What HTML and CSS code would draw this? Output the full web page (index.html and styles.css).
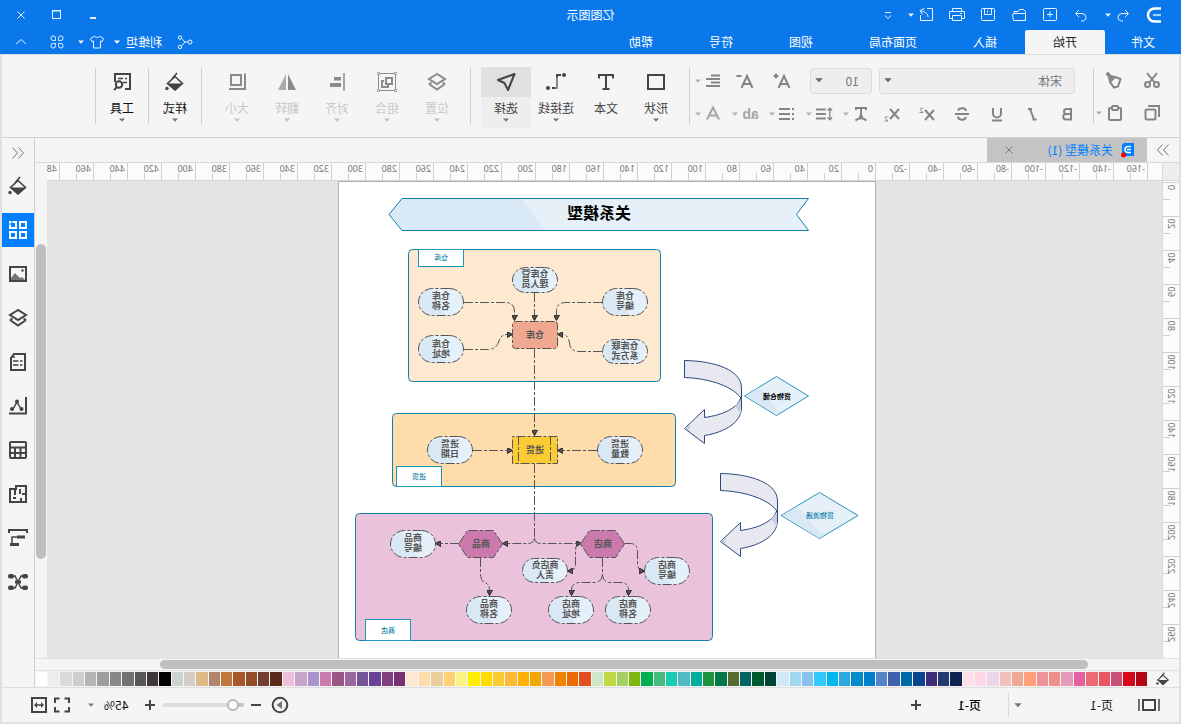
FILE: index.html
```html
<!DOCTYPE html>
<html lang="zh-CN">
<head>
<meta charset="utf-8">
<title>亿图图示</title>
<link rel="stylesheet" href="styles.css">
</head>
<body>
<svg class="sprite" aria-hidden="true">
  <symbol id="caret" viewBox="0 0 8 8"><path d="M1 2.500h6L4 5.800z" fill="currentColor"/></symbol>
  <symbol id="undo" viewBox="0 0 16 16"><path d="M6 3 2.500 6.500 6 10M3 6.500h6a4 4 0 0 1 4 4c0 2-1.500 3.500-4 3.500H8"/></symbol>
  <symbol id="redo" viewBox="0 0 16 16"><path d="M10 3l3.500 3.500L10 10M13 6.500H7a4 4 0 0 0-4 4c0 2 1.500 3.500 4 3.500h1"/></symbol>
  <symbol id="new" viewBox="0 0 16 16"><rect x="1.500" y="1.500" width="13" height="12" rx="1"/><path d="M8 4.500v6M5 7.500h6"/></symbol>
  <symbol id="open" viewBox="0 0 16 16"><path d="M1.500 13.500v-9l2-2h4l1.500 2h4v2M1.500 13.500v-6l1-1h10l2 1-1 6z"/></symbol>
  <symbol id="save" viewBox="0 0 16 16"><rect x="1.500" y="1.500" width="13" height="12" rx="1"/><path d="M4.500 1.500v6h7v-6M8.500 3.500v2"/></symbol>
  <symbol id="print" viewBox="0 0 16 16"><path d="M3.500 4.500v-3h9v3M3.500 11.500h-3v-7h15v7h-3M3.500 8.500h9v5h-9zM3 6.500h2"/></symbol>
  <symbol id="export" viewBox="0 0 16 16"><path d="M7 1.500H1.500v12h12V8M6 10c0-3 2-5 7-6M9.500 1.500 14 3.500 11.500 7.500"/></symbol>
  <symbol id="more" viewBox="0 0 8 12"><path d="M1 3.500h6M1 6.500l3 3 3-3"/></symbol>
  <symbol id="share" viewBox="0 0 16 16"><circle cx="3" cy="8" r="2"/><circle cx="13" cy="3.500" r="1.700"/><circle cx="13" cy="13" r="1.700"/><path d="M5 8h3l3.500-3.500M8 8l3.500 4"/></symbol>
  <symbol id="shirt" viewBox="0 0 16 16"><path d="M5.500 2 1.500 4.500l1.300 3L4.500 7v7h7V7l1.700.5 1.300-3-4-2.500c-1 2-4 2-5 0z"/></symbol>
  <symbol id="clover" viewBox="0 0 16 16"><path d="M6.500 6.500H4.500a2.300 2.300 0 1 1 2-2zM9.500 6.500v-2a2.300 2.300 0 1 1 2 2zM6.500 9.500v2a2.300 2.300 0 1 1-2-2zM9.500 9.500h2a2.300 2.300 0 1 1-2 2z"/></symbol>
  <symbol id="up" viewBox="0 0 16 16"><path d="M3 10l5-4.500L13 10"/></symbol>
  <symbol id="min" viewBox="0 0 12 12"><path d="M3 9h6" stroke-width="2"/></symbol>
  <symbol id="max" viewBox="0 0 12 12"><rect x="2.500" y="1.500" width="8" height="8"/><path d="M2 2h9"/></symbol>
  <symbol id="close" viewBox="0 0 12 12"><path d="M2.500 2.500l7 7M9.500 2.500l-7 7"/></symbol>

  <symbol id="cut" viewBox="0 0 18 18"><path d="M4 2l8 10M14 2 6 12"/><circle cx="4.500" cy="13.500" r="2.500"/><circle cx="13.500" cy="13.500" r="2.500"/></symbol>
  <symbol id="painter" viewBox="0 0 18 18"><path d="M2.500 8 8 6l5 5-4 5.500-4-1z"/><path d="M8 5l4-1 3-3.500L17.500 3 15 6l-1 5z" fill="currentColor" stroke="none"/></symbol>
  <symbol id="copy" viewBox="0 0 18 18"><rect x="5.500" y="5.500" width="10" height="10" rx="1"/><path d="M2 13V2h11"/></symbol>
  <symbol id="paste" viewBox="0 0 18 18"><rect x="3" y="4" width="12" height="12" rx="1"/><rect x="6" y="2" width="6" height="4" rx="1" fill="#f5f5f5"/></symbol>
  <symbol id="fontup" viewBox="0 0 18 18"><path d="M1.500 16 7 4l5.500 12M3.500 12h7M12.500 4h5M15 1.500v5"/></symbol>
  <symbol id="fontdown" viewBox="0 0 18 18"><path d="M1.500 16 7 4l5.500 12M3.500 12h7M12.500 4h5"/></symbol>
  <symbol id="align" viewBox="0 0 18 18"><path d="M2 3.500h9M2 7h14M2 10.500h9M2 14h14"/></symbol>
  <symbol id="bold" viewBox="0 0 18 18"><path d="M5 4h4.500a2.500 2.500 0 0 1 0 5H5zM5 9h5.500a2.800 2.800 0 0 1 0 5.500H5z"/></symbol>
  <symbol id="italic" viewBox="0 0 18 18"><path d="M9 4h4M4.500 14.500h4M11 4 7 14.500"/></symbol>
  <symbol id="under" viewBox="0 0 18 18"><path d="M5 3v5.500a4 4 0 0 0 8 0V3M4 15.500h10"/></symbol>
  <symbol id="strike" viewBox="0 0 18 18"><path d="M13 5.500c-1-3-8-3-8 .5M5 12c1 4 8 3.500 8-.5M2 9h14"/></symbol>
  <symbol id="sup" viewBox="0 0 18 18"><path d="M2 5l9 10M11 5 2 15"/><path d="M13 4c.5-1.500 3-1 2.800.5L13 7.500h3.500" stroke-width="1"/></symbol>
  <symbol id="sub" viewBox="0 0 18 18"><path d="M2 4l9 10M11 4 2 14"/><path d="M13 12.500c.5-1.500 3-1 2.800.5L13 16h3.500" stroke-width="1"/></symbol>
  <symbol id="textfx" viewBox="0 0 18 18"><path d="M4 5V3h10v2M9 3v8M7 11.500h4M3.500 15.500c3-3 8-3 11 0"/></symbol>
  <symbol id="spacing" viewBox="0 0 20 18"><path d="M8 4h11M8 9h11M8 14h11"/><path d="M3.500 3v12M1 5l2.500-2.500L6 5M1 13l2.500 2.500L6 13" stroke-width="1.500"/></symbol>
  <symbol id="list" viewBox="0 0 18 18"><path d="M6 4h11M6 9h11M6 14h11M2 4h2M2 9h2M2 14h2"/></symbol>
  <symbol id="colorA" viewBox="0 0 18 18"><path d="M3 14.500 9 2.500l6 12M5.500 10.500h7"/></symbol>

  <symbol id="shape" viewBox="0 0 20 20"><rect x="2" y="3" width="16" height="14"/></symbol>
  <symbol id="text" viewBox="0 0 20 20"><path d="M3 6.500V3h14v3.500M10 3v14M6.500 17h7"/></symbol>
  <symbol id="connector" viewBox="0 0 20 20"><path d="M5 3h4v13h5" stroke="#888"/><path d="M5 3h4v2M11 16h3"/><circle cx="2" cy="3" r="2" fill="currentColor" stroke="none"/><circle cx="18" cy="16" r="2" fill="currentColor" stroke="none"/></symbol>
  <symbol id="pointer" viewBox="0 0 20 20"><path d="M1.500 2 18 8l-6.500 3L8 18z" stroke-linejoin="round"/></symbol>
  <symbol id="layers" viewBox="0 0 20 20"><path d="M10 2l8 5-8 5-8-5zM2 12l8 5.500 8-5.500M2 12l2.500-1.500M18 12l-2.500-1.500"/></symbol>
  <symbol id="group" viewBox="0 0 20 20"><g stroke-width="1"><path d="M1.500 1.500h17v17h-17z"/><g fill="#f5f5f5"><circle cx="1.500" cy="1.500" r="1.300"/><circle cx="18.500" cy="1.500" r="1.300"/><circle cx="1.500" cy="18.500" r="1.300"/><circle cx="18.500" cy="18.500" r="1.300"/></g></g><rect x="5" y="6" width="6" height="6"/><path d="M13 9h2v6H9v-2"/></symbol>
  <symbol id="aligns" viewBox="0 0 20 20"><path d="M3 1v18" stroke-width="1.500"/><rect x="6" y="5" width="7" height="3.500" fill="currentColor" stroke="none"/><rect x="6" y="11" width="11" height="4" fill="currentColor" stroke="none"/></symbol>
  <symbol id="flip" viewBox="0 0 20 20"><path d="M9 2v16H1z" fill="currentColor" stroke="none"/><path d="M11 2v16h8z" fill="currentColor" stroke="none" opacity=".7"/></symbol>
  <symbol id="size" viewBox="0 0 20 20"><rect x="6" y="3" width="10" height="10"/><path d="M2 1.500V17h16"/></symbol>
  <symbol id="bucket" viewBox="0 0 20 20"><path d="M10 4.500 2.500 11.500 10 18l7.500-6.500z" stroke-width="1.600"/><path d="M2.500 11.500h15L10 18.500z" fill="currentColor" stroke="none"/><path d="M8 1l5 6" stroke-width="1.600"/><circle cx="18" cy="16.500" r="1.700" fill="currentColor" stroke="none"/></symbol>
  <symbol id="tools" viewBox="0 0 20 20"><path d="M7 17H2V2h15v8"/><path d="M5 6.500h2M9 6.500h5M5 10.500h4" stroke-width="1.500"/><circle cx="13" cy="12.500" r="3.200"/><path d="M15 15l3 3"/></symbol>

  <symbol id="gridicon" viewBox="0 0 20 20"><rect x="2" y="2" width="6" height="6"/><rect x="12" y="2" width="6" height="6"/><rect x="2" y="12" width="6" height="6"/><rect x="12" y="12" width="6" height="6"/><path d="M16 1v3h3" stroke="#007fff" stroke-width="1"/></symbol>
  <symbol id="image" viewBox="0 0 20 20"><rect x="2" y="3" width="16" height="14"/><path d="M3 16l3-3 2 1 5-5 4 5v2z" fill="#777" stroke="none"/><circle cx="5.500" cy="6.500" r="1.200" fill="currentColor" stroke="none"/></symbol>
  <symbol id="doc" viewBox="0 0 20 20"><path d="M3 2h11l3 4v12H3z"/><path d="M5.500 9H8M9.500 9H15M5.500 13H8M9.500 13H15M13 5h4" stroke-width="1.500"/></symbol>
  <symbol id="chart" viewBox="0 0 20 20"><path d="M2 1v16.500h17"/><path d="M7 13l4-7 4 7" stroke-width="1.500"/><g fill="currentColor" stroke="none"><circle cx="6.500" cy="13" r="2"/><circle cx="11" cy="5.500" r="2"/><circle cx="16" cy="13" r="2"/></g></symbol>
  <symbol id="table" viewBox="0 0 20 20"><rect x="2" y="2" width="16" height="16" rx="1"/><path d="M2 7.500h16M2 13h16M7.500 8v10M13 8v10"/></symbol>
  <symbol id="plan" viewBox="0 0 20 20"><path d="M2 2h10v3h6v13H2zM2 10h4M8 5v5M12 14h3M7 18v-4M13 6v5"/></symbol>
  <symbol id="gantt" viewBox="0 0 20 20"><path d="M1 5V2h18v3" stroke-width="2"/><path d="M3 9h8" stroke-width="3"/><path d="M11 9h5v7" stroke-width="1.500"/><path d="M9 16.500h9" stroke-width="3"/></symbol>
  <symbol id="mind" viewBox="0 0 20 20"><path d="M4 4h3l3 6 3-6h3M4 16h3l3-6 3 6h3M7 10h6" stroke-width="1.500"/><g fill="currentColor" stroke="none"><rect x="0" y="2" width="6" height="4.500" rx="2"/><rect x="14" y="2" width="6" height="4.500" rx="2"/><rect x="0" y="13.500" width="6" height="4.500" rx="2"/><rect x="14" y="13.500" width="6" height="4.500" rx="2"/><rect x="7" y="8.500" width="6" height="3"/></g></symbol>
  <symbol id="dbl-right" viewBox="0 0 14 14"><path d="M1.500 1.500 6.500 7l-5 5.500M7.500 1.500l5 5.500-5 5.500"/></symbol>
  <symbol id="dbl-left" viewBox="0 0 14 14"><path d="M12.500 1.500 7.500 7l5 5.500M6.500 1.500 1.500 7l5 5.500"/></symbol>
  <symbol id="pageview" viewBox="0 0 22 16"><rect x="5" y="3" width="12" height="10" stroke-width="2"/><path d="M1 2v12M21 2v12" stroke-width="1.500"/></symbol>
  <symbol id="plus" viewBox="0 0 12 12"><path d="M6 1v10M1 6h10" stroke-width="2"/></symbol>
  <symbol id="minus" viewBox="0 0 12 12"><path d="M1 6h10" stroke-width="2"/></symbol>
  <symbol id="play" viewBox="0 0 18 18"><circle cx="9" cy="9" r="7.300"/><path d="M7 5l5.500 4L7 13z" fill="#777" stroke="none"/></symbol>
  <symbol id="full" viewBox="0 0 18 18"><path d="M2 7V2.500h4.500M11.500 2.500H16V7M16 11v4.500h-4.500M6.500 15.500H2V11"/></symbol>
  <symbol id="fit" viewBox="0 0 18 18"><rect x="2" y="2" width="14" height="14"/><path d="M6 9h6" stroke-width="1.500"/><path d="M7 6 4 9l3 3zM11 6l3 3-3 3z" fill="currentColor" stroke="none"/></symbol>
  <marker id="arrow" markerUnits="userSpaceOnUse" markerWidth="6" markerHeight="6" refX="5" refY="3" orient="auto"><path d="M0 0l5.500 3L0 6z" fill="#555"/></marker>
  <linearGradient id="pill" x1="0" y1="0" x2="1" y2=".35"><stop offset=".68" stop-color="#e5f0f9"/><stop offset=".68" stop-color="#d9e8f5"/></linearGradient>
</svg>

<div class="app">
  <header class="chrome">
    <div class="titlebar">
      <div class="quick">
        <svg class="logo" viewBox="0 0 16 16"><path d="M1 1.500h6.500a6.500 6.500 0 0 1 0 13H1" fill="none" stroke="#fff" stroke-width="2.600"/><path d="M1 8h8" stroke="#9cd0ff" stroke-width="2.200"/></svg>
        <div class="pair"><button aria-label="撤销"><svg class="i16"><use href="#undo"/></svg></button><svg class="i8"><use href="#caret"/></svg></div>
        <button aria-label="恢复"><svg class="i16"><use href="#redo"/></svg></button>
        <button aria-label="新建"><svg class="i16"><use href="#new"/></svg></button>
        <button aria-label="打开"><svg class="i16"><use href="#open"/></svg></button>
        <button aria-label="保存"><svg class="i16"><use href="#save"/></svg></button>
        <button aria-label="打印"><svg class="i16"><use href="#print"/></svg></button>
        <div class="pair"><button aria-label="导出"><svg class="i16"><use href="#export"/></svg></button><svg class="i8"><use href="#caret"/></svg></div>
        <button aria-label="更多"><svg class="i8 tall"><use href="#more"/></svg></button>
      </div>
      <div class="title">亿图图示</div>
      <div class="wincontrols">
        <button aria-label="最小化"><svg class="i12"><use href="#min"/></svg></button>
        <button aria-label="最大化"><svg class="i12"><use href="#max"/></svg></button>
        <button aria-label="关闭"><svg class="i12"><use href="#close"/></svg></button>
      </div>
    </div>
    <nav class="menubar">
      <button class="menu file">文件</button>
      <button class="menu active">开始</button>
      <button class="menu">插入</button>
      <button class="menu">页面布局</button>
      <button class="menu">视图</button>
      <button class="menu">符号</button>
      <button class="menu">帮助</button>
      <div class="account">
        <button class="share" aria-label="分享"><svg class="i16"><use href="#share"/></svg></button>
        <button class="user">利维坦<svg class="i8"><use href="#caret"/></svg></button>
        <button class="skin" aria-label="皮肤"><svg class="i16"><use href="#shirt"/></svg><svg class="i8"><use href="#caret"/></svg></button>
        <button class="apps" aria-label="应用"><svg class="i16"><use href="#clover"/></svg></button>
        <button aria-label="收起"><svg class="i16"><use href="#up"/></svg></button>
      </div>
    </nav>
  </header>

  <div class="work">
    <div class="ribbon">
      <div class="clip">
        <button aria-label="剪切"><svg class="i18"><use href="#cut"/></svg></button>
        <button aria-label="格式刷"><svg class="i18"><use href="#painter"/></svg></button>
        <button aria-label="复制"><svg class="i18"><use href="#copy"/></svg></button>
        <button class="paste" aria-label="粘贴"><svg class="i18"><use href="#paste"/></svg><svg class="i8"><use href="#caret"/></svg></button>
      </div>
      <span class="sep tight"></span>
      <div class="fonts">
        <div class="row first">
          <label class="combo family"><select aria-label="字体"><option>宋体</option></select><svg class="i10 drop"><use href="#caret"/></svg></label>
          <label class="combo points"><select aria-label="字号"><option>10</option></select><svg class="i10 drop"><use href="#caret"/></svg></label>
          <button class="wide" aria-label="增大字号"><svg class="i18"><use href="#fontup"/></svg></button>
          <button class="wide" aria-label="减小字号"><svg class="i18"><use href="#fontdown"/></svg></button>
          <button class="split" aria-label="对齐"><svg class="i18"><use href="#align"/></svg><svg class="i8"><use href="#caret"/></svg></button>
        </div>
        <div class="row">
          <button class="fmt" aria-label="加粗"><svg class="i18"><use href="#bold"/></svg></button>
          <button class="fmt" aria-label="斜体"><svg class="i18"><use href="#italic"/></svg></button>
          <button class="fmt" aria-label="下划线"><svg class="i18"><use href="#under"/></svg></button>
          <button class="fmt" aria-label="删除线"><svg class="i18"><use href="#strike"/></svg></button>
          <button class="fmt" aria-label="上标"><svg class="i18"><use href="#sup"/></svg></button>
          <button class="fmt" aria-label="下标"><svg class="i18"><use href="#sub"/></svg></button>
          <button class="split" aria-label="文字效果"><svg class="i18"><use href="#textfx"/></svg><svg class="i8"><use href="#caret"/></svg></button>
          <button class="split" aria-label="行距"><svg class="i18"><use href="#spacing"/></svg><svg class="i8"><use href="#caret"/></svg></button>
          <button class="split" aria-label="项目符号"><svg class="i18"><use href="#list"/></svg><svg class="i8"><use href="#caret"/></svg></button>
          <button class="split light"><span class="ab">ab</span><svg class="i8"><use href="#caret"/></svg></button>
          <button class="split light" aria-label="字体颜色"><svg class="i18"><use href="#colorA"/></svg><svg class="i8"><use href="#caret"/></svg></button>
        </div>
      </div>
      <span class="sep flush"></span>
      <button class="big"><span class="pic"><svg class="i20"><use href="#shape"/></svg></span><span>形状</span><svg class="i8"><use href="#caret"/></svg></button>
      <button class="big"><span class="pic"><svg class="i20"><use href="#text"/></svg></span><span>文本</span></button>
      <button class="big"><span class="pic"><svg class="i20"><use href="#connector"/></svg></span><span>连接线</span><svg class="i8"><use href="#caret"/></svg></button>
      <button class="big on"><span class="pic"><svg class="i20"><use href="#pointer"/></svg></span><span>选择</span><svg class="i8"><use href="#caret"/></svg></button>
      <span class="sep"></span>
      <button class="big off"><span class="pic"><svg class="i20"><use href="#layers"/></svg></span><span>位置</span><svg class="i8"><use href="#caret"/></svg></button>
      <button class="big off"><span class="pic"><svg class="i20"><use href="#group"/></svg></span><span>组合</span><svg class="i8"><use href="#caret"/></svg></button>
      <button class="big off"><span class="pic"><svg class="i20"><use href="#aligns"/></svg></span><span>对齐</span><svg class="i8"><use href="#caret"/></svg></button>
      <button class="big off"><span class="pic"><svg class="i20"><use href="#flip"/></svg></span><span>翻转</span><svg class="i8"><use href="#caret"/></svg></button>
      <button class="big off"><span class="pic"><svg class="i20"><use href="#size"/></svg></span><span>大小</span><svg class="i8"><use href="#caret"/></svg></button>
      <span class="sep last"></span>
      <button class="big dark"><span class="pic"><svg class="i20"><use href="#bucket"/></svg></span><span>样式</span><svg class="i8"><use href="#caret"/></svg></button>
      <span class="sep tight"></span>
      <button class="big dark"><span class="pic"><svg class="i20"><use href="#tools"/></svg></span><span>工具</span><svg class="i8"><use href="#caret"/></svg></button>
      <span class="sep tight"></span>
    </div>

    <div class="middle">
      <main class="main">
        <div class="doctabs">
          <button class="expand" aria-label="展开"><svg class="i14"><use href="#dbl-right"/></svg></button>
          <div class="doctab">
            <svg class="docicon" viewBox="0 0 14 16"><path d="M1 1h10l2 2v11H1z" fill="#0080ff"/><path d="M4 4.500h3a3 3 0 0 1 0 6H4M4 7.500h4" fill="none" stroke="#fff" stroke-width="1.500"/><circle cx="11.500" cy="13" r="2.500" fill="#f00"/></svg>
            <span class="docname">关系模型 (1)</span>
            <button aria-label="关闭标签"><svg class="i12"><use href="#close"/></svg></button>
          </div>
        </div>
        <div class="stage">
          <div class="corner"></div>
          <div class="hruler" id="hruler"></div>
          <div class="vscroll"><div class="vthumb"></div></div>
          <div class="vruler" id="vruler"></div>
          <div class="canvas">
            <svg class="page" viewBox="306 182 536 476" width="536" height="476">
              <g class="banner">
                <path class="b1" d="M372.500 198.500H779l13 16-13 16H372.500l12-16z"/>
                <path class="b2" d="M659 199h120l12.500 15.500L779 230H638z"/>
                <path class="line" d="M372.500 198.500H779l13 16-13 16H372.500l12-16z"/>
                <text class="heading" x="582" y="219">关系模型</text>
              </g>
              <g class="zones">
                <rect x="520.500" y="249.500" width="252" height="132" rx="4" fill="#fde8d0"/>
                <rect x="505.500" y="413.500" width="283" height="73" rx="4" fill="#fedcab"/>
                <rect x="468.500" y="513.500" width="357" height="127" rx="4" fill="#ebc2db"/>
              </g>
              <g class="tags">
                <rect x="717.500" y="249.500" width="45" height="17"/><text x="740" y="260">仓库</text>
                <rect x="739.500" y="466.500" width="45" height="20"/><text x="762" y="479">进货</text>
                <rect x="770.500" y="619.500" width="45" height="21"/><text x="793" y="633">商店</text>
              </g>
              <g class="links">
                <path d="M579 302.500H616Q624.500 303 624.500 311V320"/>
                <path d="M579 351.500H603Q611 351 611.500 343Q613 334.500 618 334.500H623"/>
                <path d="M717 302.500H675Q666.500 303 666.500 311V320"/>
                <path d="M717 349.500H693Q684 349 682 341Q680 334.500 674 334.500H669"/>
                <path d="M646.500 293V320"/>
                <path d="M646.500 349V435"/>
                <path d="M584 450.500H623"/>
                <path d="M708 450.500H669"/>
                <path class="plain" d="M646.500 464V538"/>
                <path d="M646.500 538Q646 543.500 640 543.500H600"/>
                <path d="M646.500 538Q647 543.500 653 543.500H678"/>
                <path d="M722 543.500H745"/>
                <path d="M700.500 558V575Q700 582 695 583Q691.500 585 691.500 590V595"/>
                <path d="M556 543.500H550Q543.500 544 543.500 551V564Q543 571 537 571"/>
                <path d="M600 543.500Q605.500 544 605.500 550V565Q606 571 613 571"/>
                <path d="M578.500 558V575Q578 582 571 582.500H560Q552.500 583 552.500 590V595"/>
                <path d="M578.500 575Q579 582 586 582.500H602Q609.500 583 609.500 590V595"/>
              </g>
              <g class="cores">
                <rect x="623.500" y="321.500" width="45" height="27" rx="3" fill="#f0a890"/><text x="646" y="338">仓库</text>
                <rect x="623.500" y="436.500" width="45" height="27" fill="#facb32"/><path d="M630.500 436V464M662.500 436V464"/><text x="646" y="453">进货</text>
                <path d="M556.500 544l9-13.500h26l9 13.500-9 13.500h-26z" fill="#cc7aae"/><text x="578" y="547">商店</text>
                <path d="M678.500 544l9-13.500h26l9 13.500-9 13.500h-26z" fill="#cc7aae"/><text x="700" y="547">商品</text>
              </g>
              <g class="pills">
                <rect x="623.500" y="267.500" width="45" height="25" rx="13"/><text x="646" y="277">仓库管<tspan x="646" dy="10">理人员</tspan></text>
                <rect x="533.500" y="288.500" width="45" height="27" rx="14"/><text x="556" y="299">仓库<tspan x="556" dy="10">编号</tspan></text>
                <rect x="533.500" y="339.500" width="45" height="24" rx="12"/><text x="556" y="349">仓库联<tspan x="556" dy="10">系方式</tspan></text>
                <rect x="717.500" y="288.500" width="45" height="27" rx="14"/><text x="740" y="299">仓库<tspan x="740" dy="10">名称</tspan></text>
                <rect x="717.500" y="335.500" width="45" height="27" rx="14"/><text x="740" y="347">仓库<tspan x="740" dy="10">地址</tspan></text>
                <rect x="538.500" y="436.500" width="45" height="27" rx="14"/><text x="561" y="447">进货<tspan x="561" dy="10">数量</tspan></text>
                <rect x="708.500" y="436.500" width="45" height="27" rx="14"/><text x="731" y="447">进货<tspan x="731" dy="10">日期</tspan></text>
                <rect x="745.500" y="530.500" width="45" height="27" rx="14"/><text x="768" y="541">商品<tspan x="768" dy="10">编号</tspan></text>
                <rect x="613.500" y="558.500" width="45" height="24" rx="12"/><text x="636" y="568">商店负<tspan x="636" dy="10">责人</tspan></text>
                <rect x="491.500" y="557.500" width="45" height="27" rx="14"/><text x="514" y="568">商店<tspan x="514" dy="10">编号</tspan></text>
                <rect x="669.500" y="596.500" width="45" height="27" rx="14"/><text x="692" y="607">商品<tspan x="692" dy="10">名称</tspan></text>
                <rect x="587.500" y="596.500" width="45" height="27" rx="14"/><text x="610" y="607">商店<tspan x="610" dy="10">地址</tspan></text>
                <rect x="530.500" y="596.500" width="45" height="27" rx="14"/><text x="553" y="607">商店<tspan x="553" dy="10">名称</tspan></text>
              </g>
              <g class="diamonds">
                <path d="M404.500 376.500 436.500 396l-32 19.500-32-19.500z"/><path class="shade" d="M422 387.500 435.500 396l-31 19-3-2z"/><text class="ink" x="404" y="399">货物仓储</text>
                <path d="M361.500 492.500 400 515.500l-38.500 23-38.500-23z"/><path class="shade" d="M384 506.500 399 515.500l-37 22.500-4-2z"/><text x="361" y="518">货物流通</text>
              </g>
              <g class="arrows">
                <g id="curve">
                  <path d="M496.500 360.500C466 361 439.500 370 439.500 388V399C447 387 470 378.500 496.500 377.500z" transform="translate(0 0)"/>
                  <path d="M439.500 399V408C440 422 455 432 476.500 435.500V443.500L496.500 428.500 476.500 409.500V417.500C458 415 443 408 440 397z"/>
                  <path class="dim" d="M440 399.500V414l6-8zM496 428l-5-4 1 7z"/>
                </g>
                <use href="#curve" x="-36" y="113"/>
              </g>
            </svg>
          </div>
        </div>
        <div class="hscroll"><div class="hthumb"></div></div>
        <div class="palette"><button class="fill" aria-label="填充"><svg class="i14 paint"><use href="#bucket"/></svg></button><div class="swatches" id="swatches"></div></div>
      </main>
      <aside class="side">
        <button class="collapse" aria-label="收起面板"><svg class="i14"><use href="#dbl-left"/></svg></button>
        <button aria-label="填充"><svg class="i20"><use href="#bucket"/></svg></button>
        <button class="current" aria-label="主题"><svg class="i20"><use href="#gridicon"/></svg></button>
        <button aria-label="图片"><svg class="i20"><use href="#image"/></svg></button>
        <button aria-label="图层"><svg class="i20"><use href="#layers"/></svg></button>
        <button aria-label="页面"><svg class="i20"><use href="#doc"/></svg></button>
        <button aria-label="图表"><svg class="i20"><use href="#chart"/></svg></button>
        <button aria-label="表格"><svg class="i20"><use href="#table"/></svg></button>
        <button aria-label="平面图"><svg class="i20"><use href="#plan"/></svg></button>
        <button aria-label="甘特图"><svg class="i20"><use href="#gantt"/></svg></button>
        <button aria-label="思维导图"><svg class="i20"><use href="#mind"/></svg></button>
      </aside>
    </div>

    <footer class="status">
      <button class="view" aria-label="页面视图"><svg class="pv"><use href="#pageview"/></svg></button>
      <button class="pagepick"><span>页-1</span><svg class="i10"><use href="#caret"/></svg></button>
      <button class="pagetab">页-1</button>
      <button class="add" aria-label="添加页"><svg class="i12"><use href="#plus"/></svg></button>
      <div class="zoom">
        <button aria-label="演示"><svg class="i18"><use href="#play"/></svg></button>
        <button class="zout" aria-label="缩小"><svg class="i12"><use href="#minus"/></svg></button>
        <input class="range" type="range" min="0" max="100" value="8" aria-label="缩放">
        <button class="zin" aria-label="放大"><svg class="i12"><use href="#plus"/></svg></button>
        <button class="percent"><span>45%</span><svg class="i8"><use href="#caret"/></svg></button>
        <button class="fullscreen" aria-label="全屏"><svg class="i18"><use href="#full"/></svg></button>
        <button aria-label="适应宽度"><svg class="i18"><use href="#fit"/></svg></button>
      </div>
    </footer>
  </div>
</div>
<script src="script.js"></script>
</body>
</html>
```
FILE: styles.css
```css
* { box-sizing: border-box; }
body {
  margin: 0;
  font: 12px/16px "Noto Sans CJK SC", sans-serif;
  color: #222;
}
button {
  display: flex;
  align-items: center;
  justify-content: center;
  margin: 0;
  padding: 0;
  border: 0;
  background: none;
  color: inherit;
  font: inherit;
}
svg { display: block; flex: none; fill: none; stroke: currentColor; }
.sprite { position: absolute; width: 0; height: 0; }
.i8 { width: 8px; height: 8px; stroke: none; }
.i8.tall { height: 12px; stroke: currentColor; }
.i10 { width: 10px; height: 10px; stroke: none; }
.i12 { width: 12px; height: 12px; }
.i14 { width: 14px; height: 14px; }
.i16 { width: 16px; height: 16px; }
.i18 { width: 18px; height: 18px; stroke-width: 2; }
.i20 { width: 20px; height: 20px; stroke-width: 2; }

/* The whole window is shown flipped left to right */
.app {
  display: flex;
  flex-direction: column;
  height: 100vh;
  overflow: hidden;
  transform: scaleX(-1);
  background: #f5f5f5;
}

/* Title bar and menus */
.chrome { background: #0a78eb; color: #e8f3ff; }
.titlebar { display: grid; grid-template-columns: 1fr auto 1fr; align-items: center; height: 30px; }
.quick { display: flex; align-items: center; gap: 15px; padding-left: 19px; }
.logo { width: 16px; height: 16px; stroke: none; }
.pair { display: flex; align-items: center; gap: 3px; }
.title { color: #fff; }
.wincontrols { display: flex; justify-content: flex-end; padding-right: 3px; }
.wincontrols button { width: 36px; height: 28px; }
.menubar { display: flex; height: 24px; }
.menu { padding: 0 28px; color: #fff; }
.menu.file { padding: 0 26px; }
.menu.active { background: #f5f5f5; color: #222; border-radius: 2px 2px 0 0; }
.account { display: flex; align-items: center; margin-left: auto; padding-right: 13px; }
.share { margin-right: 15px; }
.user { gap: 5px; margin-right: 8px; color: #fff; }
.skin { gap: 4px; margin-right: 12px; }
.apps { margin-right: 20px; }

.work {
  display: flex;
  flex: 1;
  flex-direction: column;
  min-height: 0;
  border: solid #e0e0e0;
  border-width: 0 2px 2px;
}

/* Ribbon */
.ribbon {
  display: flex;
  align-items: flex-start;
  height: 84px;
  padding: 12px 0 0 8px;
  border-top: 1px solid #dcdcdc;
  border-bottom: 1px solid #d0d0d0;
}
.sep { width: 1px; height: 56px; margin: 1px 8px 0 10px; background: #d0d0d0; }
.sep.tight { margin: 1px 1px 0; }
.sep.flush { margin-left: 0; }
.sep.last { margin-right: 1px; }
.clip {
  display: grid;
  grid-template-columns: 38px 38px;
  grid-template-rows: 25px 42px;
  color: #858585;
}
.clip button { height: 26px; }
.clip button:nth-child(n+3) { height: 42px; }
.clip .paste { gap: 3px; justify-content: flex-end; }
.fonts { padding-left: 7px; color: #858585; }
.row { display: flex; align-items: center; height: 40px; }
.row.first { height: 27px; padding-left: 10px; }
.combo { position: relative; height: 26px; margin-right: 7px; }
.combo select {
  width: 100%;
  height: 100%;
  padding: 0 12px;
  border: 1px solid #dcdce0;
  border-radius: 3px;
  appearance: none;
  background: #eee;
  color: #777;
  font: inherit;
}
.family { width: 196px; }
.points { width: 62px; margin-right: 9px; }
.drop { position: absolute; top: 7px; right: 4px; color: #666; }
.wide { width: 37px; height: 26px; }
.fmt { width: 35px; height: 26px; }
.split { width: 37px; height: 26px; gap: 2px; }
.split .i8, .paste .i8 { color: #b0b0b0; }
.light { color: #a5a5a5; }
.ab { width: 18px; font: 700 14px/18px "Liberation Sans", sans-serif; }
.big {
  flex-direction: column;
  justify-content: flex-start;
  width: 50px;
  height: 61px;
  border-radius: 2px;
  color: #444;
}
.pic { display: grid; place-items: center; width: 100%; height: 30px; margin-bottom: 3px; }
.big .i8 { color: #777; }
.on { background: #eee; }
.on .pic { background: #e0e0e0; }
.off { color: #c8c8c8; }
.off .pic { color: #8a8a8a; }
.off .i8 { color: #c0c0c0; }
.dark > span { color: #111; }
.dark .pic { color: #444; }

/* Document area */
.middle { display: flex; flex: 1; min-height: 0; }
.main { display: flex; flex: 1; flex-direction: column; min-width: 0; }
.doctabs { display: flex; height: 25px; border-bottom: 1px solid #d8d8d8; color: #777; }
.expand { width: 32px; }
.doctab { display: flex; align-items: center; width: 160px; padding: 0 16px 0 12px; background: #c4c4c4; }
.docicon { width: 14px; height: 16px; margin-right: 8px; stroke: none; }
.docname { margin-right: auto; color: #0080ff; }
.stage {
  display: grid;
  grid-template-columns: 17px 1fr 12px;
  grid-template-rows: 18px 1fr;
  flex: 1;
  min-height: 0;
}
.corner { background: #eee; border-right: 1px solid #d8d8d8; border-bottom: 1px solid #d8d8d8; }
.hruler {
  display: flex;
  overflow: hidden;
  padding-left: 14px;
  border-bottom: 1px solid #d8d8d8;
  background: #fbfbfb;
}
.tick { flex: none; font: 9px/12px "Noto Sans", sans-serif; color: #777; }
.hruler .tick {
  width: 34px;
  padding-left: 2px;
  border-left: 1px solid #d0d0d0;
  background: linear-gradient(#d0d0d0, #d0d0d0) 16px 100% / 1px 7px no-repeat;
}
.vruler {
  overflow: hidden;
  padding-top: 1px;
  border-right: 1px solid #d8d8d8;
  background: #fbfbfb;
}
.vruler .tick {
  display: flex;
  height: 34px;
  padding: 2px 0 0 2px;
  border-top: 1px solid #d0d0d0;
  background: linear-gradient(#d0d0d0, #d0d0d0) 100% 16px / 7px 1px no-repeat;
}
.vruler span { writing-mode: vertical-rl; transform: rotate(180deg); text-align: right; }
.vscroll { grid-column: 3; grid-row: 1 / 3; padding: 81px 1px 0; }
.vthumb { height: 76%; border-radius: 5px; background: #bfbfbf; }
.canvas { overflow: hidden; padding-left: 286px; background: #e4e4e4; }
.page { background: #fff; border: 1px solid #b0b0b0; border-bottom: 0; box-sizing: content-box; }
.hscroll { height: 13px; padding: 1px 12px 0 0; border: solid #e0e0e0; border-width: 1px 0; }
.hthumb { height: 9px; margin: 0 10% 0 8%; border-radius: 5px; background: #bfbfbf; }
.palette { display: flex; height: 16px; padding: 1px 1px 1px 0; }
.fill { width: 32px; color: #444; }
.paint { stroke-width: 2; }
.swatches { display: flex; flex: 1; gap: 1px; }
.swatch { flex: 1; }

/* Diagram */
.page text { stroke: none; text-anchor: middle; font-weight: 700; font-size: 9px; fill: #555; }
.page .heading { font-size: 16px; fill: #000; }
.banner path, .zones rect { stroke: #1080ab; }
.banner .b1 { fill: #e5f0f9; stroke: none; }
.banner .b2 { fill: #dae9f6; stroke: none; }
.tags rect { fill: #fff; stroke: #1e96be; }
.page .tags text { font-size: 7px; font-weight: 500; fill: #1080ab; }
.links path { stroke: #555; stroke-dasharray: 9 2 3 2; marker-end: url(#arrow); }
.links .plain { marker-end: none; }
.cores rect, .cores path { stroke: #555; stroke-dasharray: 9 2 3 2; }
.pills rect { fill: url(#pill); stroke: #555; stroke-dasharray: 9 2 3 2; }
.diamonds path { fill: #e5f0f9; stroke: #2a94b8; }
.diamonds .shade { fill: #d9e8f5; stroke: none; }
.page .diamonds text { font-size: 7px; font-weight: 500; fill: #1080ab; }
.page .diamonds .ink { font-weight: 700; fill: #000; }
.arrows path { fill: #e8e9f0; stroke: #2a4a7c; }
.arrows .dim { fill: #c9cde0; stroke: none; }

/* Right-hand tools */
.side { width: 33px; border-left: 1px solid #d0d0d0; color: #444; }
.side button { width: 100%; height: 34px; margin-bottom: 10px; }
.side .collapse { height: 30px; margin-bottom: 1px; color: #777; }
.side .current { background: #007fff; color: #fff; }

/* Status bar */
.status { display: flex; align-items: center; height: 35px; border-top: 1px solid #dedede; color: #444; }
.view { margin: 0 25px 0 19px; }
.pv { width: 22px; height: 16px; }
.pagepick { justify-content: space-between; width: 105px; height: 24px; padding-right: 4px; border-right: 1px solid #d8d8d8; }
.pagepick span, .percent span { color: #111; }
.pagepick .i10 { color: #777; }
.pagetab { margin-left: 27px; color: #000; font-weight: 500; }
.add { margin-left: 36px; }
.zoom { display: flex; align-items: center; margin-left: auto; padding-right: 28px; }
.zout { margin: 0 6px 0 9px; }
.range { width: 82px; height: 14px; margin: 0; appearance: none; background: none; }
.range::-webkit-slider-runnable-track { height: 4px; border-radius: 2px; background: linear-gradient(90deg, #c4c4c4 14%, #dedede 14%); }
.range::-webkit-slider-thumb { width: 12px; height: 12px; margin-top: -4px; border: 2px solid #b8b8b8; border-radius: 50%; appearance: none; background: #fff; }
.zin { margin: 0 16px 0 6px; }
.percent { gap: 9px; margin-right: 16px; }
.percent .i8 { color: #777; }
.fullscreen { margin-right: 5px; }
```
FILE: script.js
```js
function ruler(id, from, to) {
  const host = document.getElementById(id);
  for (let n = from; n <= to; n += 20) {
    const tick = document.createElement("div");
    const label = document.createElement("span");
    tick.className = "tick";
    label.textContent = n;
    tick.append(label);
    host.append(tick);
  }
}
ruler("hruler", -160, 480);
ruler("vruler", 0, 260);

const colors = `b30713 d9071c c94f76 ea5562 ee6c72 e660a0 e49bb8 ef8f88 f0919c ffa07a
f0aa94 f5bfbd ead5e9 ffd5e8 ffe0e6 0f2350 223a72 3f2d7a 07468c 0068a5
3e62ad 5585c8 0080cc 008ccc 2ea8e2 00b6f0 33c8fa 88c2ec a0d8ef cfeaf6
004433 005a30 006462 556b2f 007a48 1f943e 00ae9e 50bcc2 1bccb4 48ba7f
00b050 80b812 a4d064 c0d843 cde7c8 e34f1f ec6a00 f08300 f49a54 f2a600
ffb000 ffb838 facb32 ffdb00 ffee00 fcf285 fed274 eacd9a fedcab fee8d0
7a3173 823c82 684298 755598 9a679f 9b5685 cc7aae a993cf c7a5cb ebc2d9
5b2a1a 743d31 924e2b a8562a c0783e b2846c dfb887 d5ccc6 cbd4cc 000000
3f3838 585656 717171 888888 9d9f9e b4b6b5 cdcecd dadada ededed ffffff`.split(/\s+/);
const swatches = document.getElementById("swatches");
for (const color of colors) {
  const cell = document.createElement("div");
  cell.className = "swatch";
  cell.style.background = "#" + color;
  swatches.append(cell);
}
```
